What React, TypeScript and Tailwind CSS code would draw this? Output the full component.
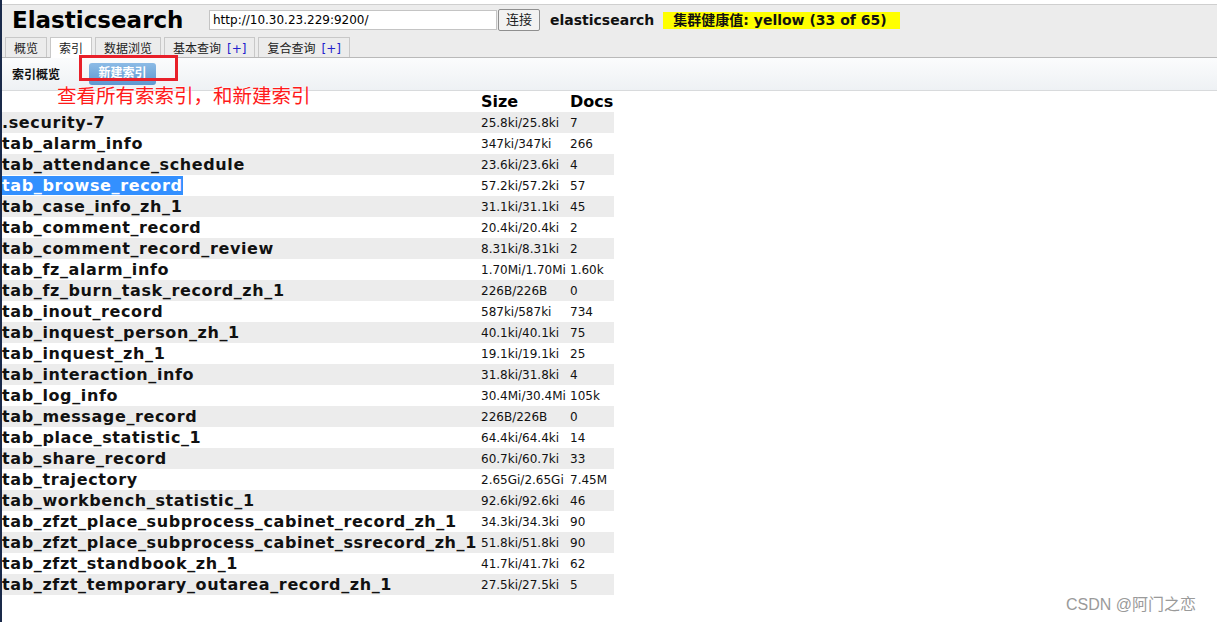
import React from "react";

const rows: [string, string, string][] = [
  [".security-7", "25.8ki/25.8ki", "7"],
  ["tab_alarm_info", "347ki/347ki", "266"],
  ["tab_attendance_schedule", "23.6ki/23.6ki", "4"],
  ["tab_browse_record", "57.2ki/57.2ki", "57"],
  ["tab_case_info_zh_1", "31.1ki/31.1ki", "45"],
  ["tab_comment_record", "20.4ki/20.4ki", "2"],
  ["tab_comment_record_review", "8.31ki/8.31ki", "2"],
  ["tab_fz_alarm_info", "1.70Mi/1.70Mi", "1.60k"],
  ["tab_fz_burn_task_record_zh_1", "226B/226B", "0"],
  ["tab_inout_record", "587ki/587ki", "734"],
  ["tab_inquest_person_zh_1", "40.1ki/40.1ki", "75"],
  ["tab_inquest_zh_1", "19.1ki/19.1ki", "25"],
  ["tab_interaction_info", "31.8ki/31.8ki", "4"],
  ["tab_log_info", "30.4Mi/30.4Mi", "105k"],
  ["tab_message_record", "226B/226B", "0"],
  ["tab_place_statistic_1", "64.4ki/64.4ki", "14"],
  ["tab_share_record", "60.7ki/60.7ki", "33"],
  ["tab_trajectory", "2.65Gi/2.65Gi", "7.45M"],
  ["tab_workbench_statistic_1", "92.6ki/92.6ki", "46"],
  ["tab_zfzt_place_subprocess_cabinet_record_zh_1", "34.3ki/34.3ki", "90"],
  ["tab_zfzt_place_subprocess_cabinet_ssrecord_zh_1", "51.8ki/51.8ki", "90"],
  ["tab_zfzt_standbook_zh_1", "41.7ki/41.7ki", "62"],
  ["tab_zfzt_temporary_outarea_record_zh_1", "27.5ki/27.5ki", "5"],
];

const font = { fontFamily: '"DejaVu Sans", Verdana, "Noto Sans CJK SC", sans-serif' };

function Tab({ label, active, plus }: { label: string; active?: boolean; plus?: boolean }) {
  return (
    <div
      className={`px-[8px] pt-[3px] border border-[#c8c8c8] border-b-0 text-[12px] leading-[17px] text-[#222] ${
        active ? "bg-white h-[21px] -mb-px" : "bg-[#ececec] h-[20px]"
      }`}
    >
      {label}
      {plus && <span className="text-[#2222cc] ml-[6px]">[+]</span>}
    </div>
  );
}

export default function App() {
  return (
    <div className="relative w-[1217px] h-[622px] bg-white overflow-hidden border-l-2 border-[#1a2a4a]" style={font}>
      <div className="pt-[4px]">
        {/* header */}
        <div className="bg-[#ececec] border-t border-[#cfcfcf] border-b border-b-[#b9b9b9]">
          <div className="flex items-center h-[28px] pl-[10px] pt-[2px]">
            <div className="text-[23px] font-bold text-black leading-none w-[197px]">Elasticsearch</div>
            <div className="w-[288px] h-[20px] bg-white border border-[#c4c4c4] text-[12px] leading-[18px] pl-[3px] text-black">
              http://10.30.23.229:9200/
            </div>
            <div className="ml-[1px] w-[42px] h-[22px] border border-[#8f8f8f] rounded-[2px] bg-[#f2f2f2] text-[13px] leading-[20px] text-center text-[#222]">
              连接
            </div>
            <div className="ml-[10px] text-[14px] font-bold text-[#111]">elasticsearch</div>
            <div className="ml-[9px] bg-[#ffff00] h-[17px] w-[237px] text-[14px] font-bold leading-[17px] pl-[10px] text-[#111]">
              集群健康值: yellow (33 of 65)
            </div>
          </div>
          <div className="flex items-end gap-[3px] pl-[3px] pt-[4px]">
            <Tab label="概览" />
            <Tab label="索引" active />
            <Tab label="数据浏览" />
            <Tab label="基本查询" plus />
            <Tab label="复合查询" plus />
          </div>
        </div>
        {/* sub bar */}
        <div className="h-[33px] bg-gradient-to-b from-[#fbfcfd] to-[#eef1f4] border-b border-[#d8dadc] flex items-start pl-[10px]">
          <div className="text-[12px] font-bold text-[#111] mt-[8px]">索引概览</div>
          <div className="ml-[29px] mt-[5px] w-[67px] h-[22px] rounded-[3px] bg-gradient-to-b from-[#8cbbe6] to-[#5e98d0] text-white text-[12px] font-bold text-center leading-[20px]">
            新建索引
          </div>
        </div>
        {/* table */}
        <table className="border-collapse">
          <thead>
            <tr className="h-[21px]">
              <th className="w-[476px]"></th>
              <th className="w-[90px] text-left pl-[3px] text-[16px] font-bold leading-[20px]">Size</th>
              <th className="w-[46px] text-left pl-[2px] text-[16px] font-bold leading-[20px]">Docs</th>
            </tr>
          </thead>
          <tbody>
            {rows.map((r, i) => (
              <tr key={r[0]} className={`h-[21px] ${i % 2 === 0 ? "bg-[#ececec]" : "bg-white"}`}>
                <td className="pl-0 text-[16px] font-bold text-[#111] leading-[21px] whitespace-nowrap tracking-[0.62px]">
                  {i === 3 ? <span className="bg-[#3390ff] text-white">{r[0]}</span> : r[0]}
                </td>
                <td className="pl-[3px] text-[12px] text-[#111] whitespace-nowrap">{r[1]}</td>
                <td className="pl-[2px] text-[12px] text-[#111] whitespace-nowrap">{r[2]}</td>
              </tr>
            ))}
          </tbody>
        </table>
      </div>

      {/* annotation */}
      <div className="absolute left-[77px] top-[55px] w-[99px] h-[26px] border-[3px] border-[#e8202a]" />
      <div
        className="absolute left-[55px] top-[83px] text-[19.5px] leading-[24px] text-[#ff1a1a] whitespace-nowrap"
        style={{ fontFamily: '"Noto Sans CJK SC", sans-serif', textShadow: "0 0 2px #fff, 0 0 2px #fff" }}
      >
        查看所有索索引，和新建索引
      </div>

      <div
        className="absolute left-[1064px] top-[593px] text-[16px] text-[#9a9a9a] whitespace-nowrap"
        style={{ fontFamily: '"Liberation Sans", "Noto Sans CJK SC", sans-serif' }}
      >
        CSDN @阿门之恋
      </div>
    </div>
  );
}
